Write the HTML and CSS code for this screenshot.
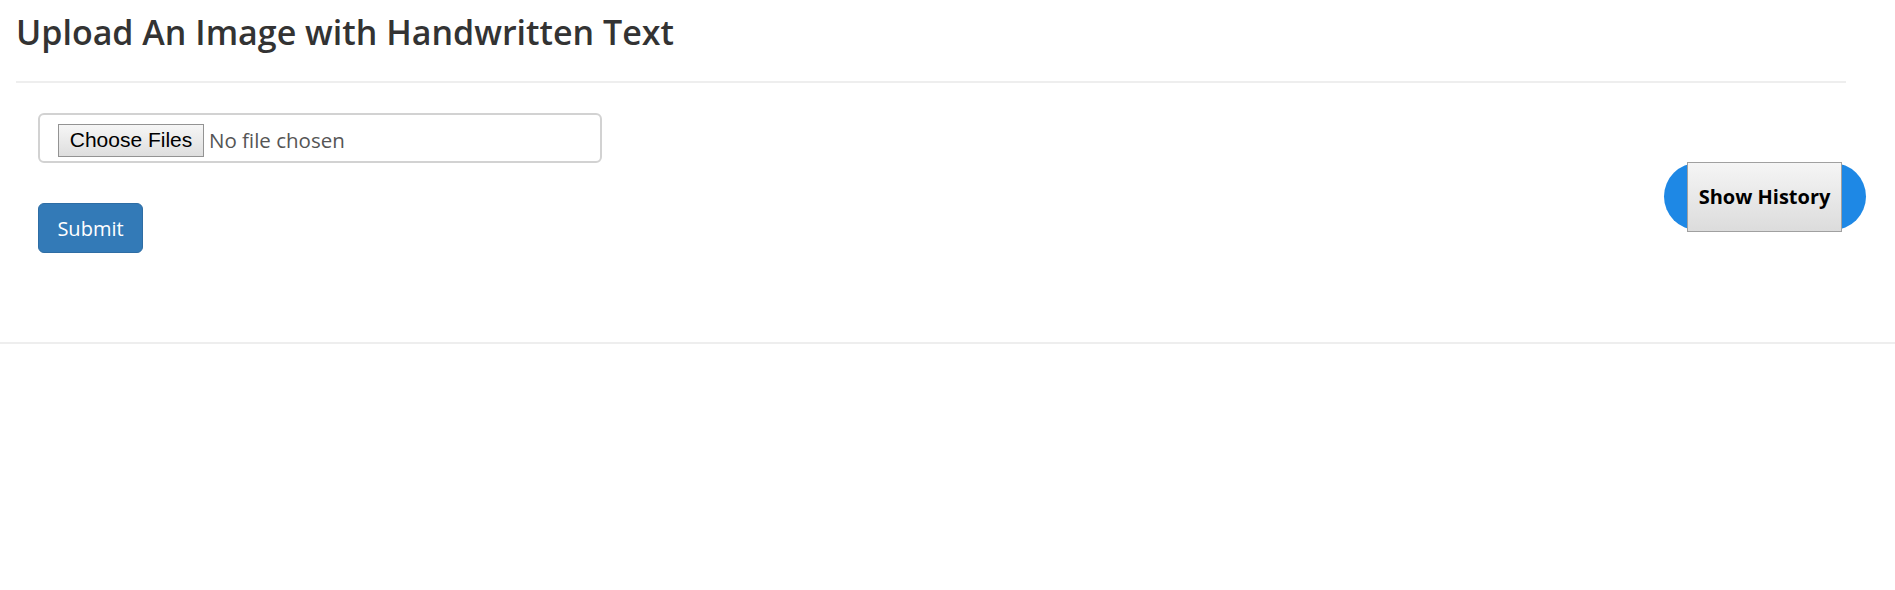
FILE: index.html
```html
<!DOCTYPE html>
<html>
<head>
<meta charset="utf-8">
<title>Upload</title>
<link rel="stylesheet" href="styles.css">
</head>
<body>
<div class="header">
  <h3 class="title">Upload An Image with Handwritten Text</h3>
  <hr class="rule">
</div>
<div class="content">
  <form class="upload">
    <div class="file-box">
      <span class="file-btn">Choose Files</span>
      <span class="file-none">No file chosen</span>
    </div>
    <button type="button" class="submit">Submit</button>
  </form>
  <div class="pill"><button type="button" class="history">Show History</button></div>
</div>
<hr class="bottom">
</body>
</html>
```
FILE: styles.css
```css
body {
  margin: 0;
  font-family: "Open Sans", "Noto Sans", sans-serif;
  color: #333;
  background: #fff;
}
.header {
  padding: 0 49px 0 16px;
}
.title {
  margin: 0;
  padding-top: 12px;
  font-size: 34px;
  font-weight: 600;
  line-height: 40px;
  color: #333;
}
.rule {
  margin: 29px 0 0 0;
  border: 0;
  border-top: 2px solid #eee;
  height: 0;
}
.content {
  display: flex;
  justify-content: space-between;
  align-items: flex-start;
  padding: 30px 29px 89px 38px;
}
.upload {
  display: flex;
  flex-direction: column;
  align-items: flex-start;
  gap: 40px;
  margin: 0;
}
.file-box {
  box-sizing: border-box;
  width: 564px;
  height: 50px;
  border: 2px solid #d2d2d2;
  border-radius: 6px;
  display: flex;
  align-items: center;
  padding: 4px 18px 0;
}
.file-btn {
  box-sizing: border-box;
  height: 33px;
  width: 146px;
  border: 1px solid #939393;
  background: linear-gradient(#f6f6f6, #dedede);
  font-family: "Liberation Sans", Arial, sans-serif;
  font-size: 21px;
  color: #000;
  display: flex;
  align-items: center;
  justify-content: center;
}
.file-none {
  margin-left: 5px;
  font-size: 20.5px;
  color: #555;
}
.submit {
  box-sizing: border-box;
  width: 105px;
  height: 50px;
  background: #337ab7;
  border: 1px solid #2e6da4;
  border-radius: 6px;
  color: #fff;
  font-family: inherit;
  font-size: 20px;
  padding: 0;
}
.pill {
  box-sizing: border-box;
  margin-top: 50px;
  width: 202px;
  height: 67px;
  border-radius: 34px;
  background: #1e88e5;
  display: flex;
  align-items: center;
  padding-left: 23px;
}
.history {
  box-sizing: border-box;
  flex: none;
  width: 155px;
  height: 70px;
  border: 1px solid #a0a0a0;
  background: linear-gradient(#f5f5f5, #dcdcdc);
  font-family: inherit;
  font-weight: 700;
  font-size: 20px;
  color: #000;
  padding: 0;
}
.bottom {
  margin: 0;
  border: 0;
  border-top: 2px solid #eee;
  height: 0;
}
```
